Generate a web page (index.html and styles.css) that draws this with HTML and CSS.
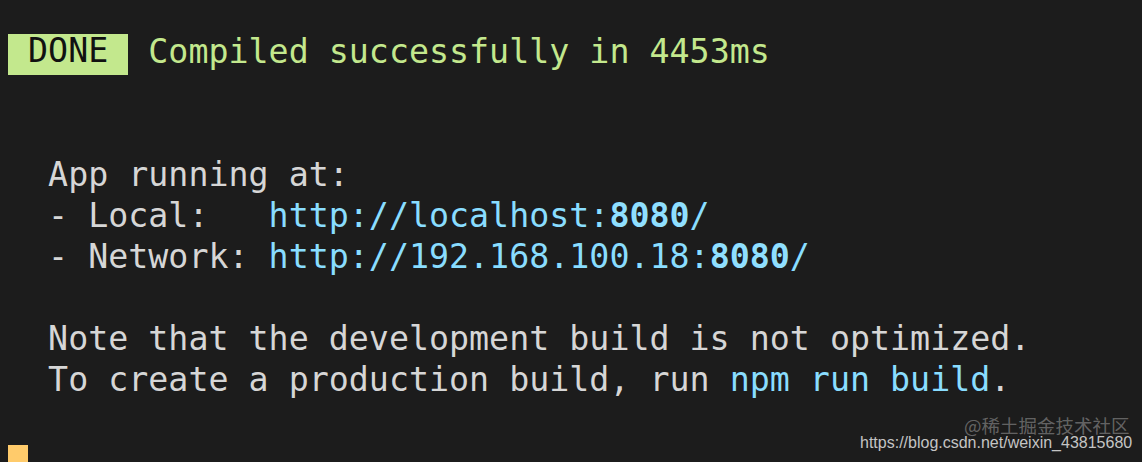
FILE: index.html
```html
<!DOCTYPE html>
<html lang="en">
<head>
<meta charset="utf-8">
<title>Terminal</title>
<link rel="stylesheet" href="styles.css">
</head>
<body>
<div class="term">
  <div class="line"><span class="badge"> DONE </span> <span class="green">Compiled successfully in 4453ms</span></div>
  <div class="line"></div>
  <div class="line"></div>
  <div class="line">  App running at:</div>
  <div class="line">  - Local:   <span class="blue">http://localhost:<b>8080</b>/</span></div>
  <div class="line">  - Network: <span class="blue">http://192.168.100.18:<b>8080</b>/</span></div>
  <div class="line"></div>
  <div class="line">  Note that the development build is not optimized.</div>
  <div class="line">  To create a production build, run <span class="blue">npm run build</span>.</div>
  <div class="line"></div>
  <div class="line"><span class="cursor"></span></div>
</div>
<div class="watermark">
  <span class="wm-cn">@稀土掘金技术社区</span>
  <span class="wm-url">https://blog.csdn.net/weixin_43815680</span>
</div>
</body>
</html>
```
FILE: styles.css
```css
html, body {
  margin: 0;
  padding: 0;
  background: #1c1c1c;
  height: 100%;
  overflow: hidden;
}

.term {
  padding: 30.6px 0 0 8px;
  font-family: "DejaVu Sans Mono", "Liberation Mono", monospace;
  font-size: 33.3px;
  line-height: 41.1px;
  color: #d6d6d6;
}

.line {
  height: 41.1px;
  white-space: pre;
}

.badge {
  display: inline-block;
  vertical-align: top;
  margin-top: 3.4px;
  line-height: 34.2px;
  padding-bottom: 6.8px;
  background: #c3e88d;
  color: #111111;
}

.green {
  color: #c3e88d;
}

.blue {
  color: #89ddff;
}

.blue b {
  font-weight: bold;
  color: #8fdfff;
}

.cursor {
  display: inline-block;
  vertical-align: top;
  margin-top: 3.4px;
  width: 1ch;
  height: 41px;
  background: #ffcb6b;
}

.watermark {
  position: absolute;
  right: 2px;
  bottom: 3px;
  width: 280px;
  height: 45px;
}

.wm-cn {
  position: absolute;
  left: 104px;
  top: 0;
  font-family: "Noto Sans CJK SC", sans-serif;
  font-size: 18.5px;
  line-height: 22px;
  color: rgba(255, 255, 255, 0.33);
  white-space: nowrap;
}

.wm-url {
  position: absolute;
  left: 0;
  top: 19px;
  font-family: "Liberation Sans", Arial, sans-serif;
  font-size: 16px;
  line-height: 20px;
  color: #c4c4c4;
  white-space: nowrap;
}
```
